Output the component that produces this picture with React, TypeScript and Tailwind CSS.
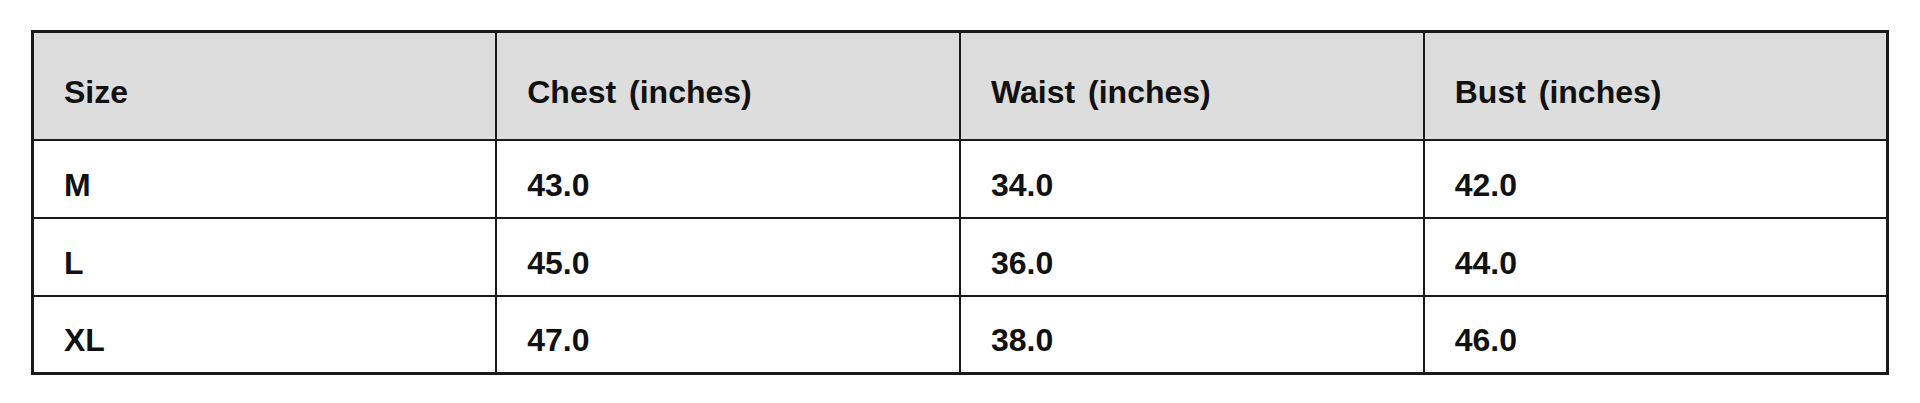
import React from 'react';

const headers = ['Size', 'Chest (inches)', 'Waist (inches)', 'Bust (inches)'];

const rows = [
  ['M', '43.0', '34.0', '42.0'],
  ['L', '45.0', '36.0', '44.0'],
  ['XL', '47.0', '38.0', '46.0'],
];

export default function App() {
  return (
    <div className="w-[1920px] h-[403px] bg-white pt-[30px] px-[31px] font-['Liberation_Sans',Arial,sans-serif] text-[#111]">
      <table className="w-full table-fixed border-collapse border-[3px] border-[#1a1a1a]">
        <thead>
          <tr className="bg-[#dddddd]">
            {headers.map((h) => (
              <th
                key={h}
                className="h-[108px] border-[2.5px] border-[#1a1a1a] pl-[30px] pt-[12px] text-left align-middle text-[32px] font-bold [word-spacing:4px]"
              >
                {h}
              </th>
            ))}
          </tr>
        </thead>
        <tbody>
          {rows.map((r) => (
            <tr key={r[0]}>
              {r.map((c, i) => (
                <td
                  key={i}
                  className="h-[78px] border-[2.5px] border-[#1a1a1a] pl-[30px] pt-[12px] align-middle text-[32px] font-bold"
                >
                  {c}
                </td>
              ))}
            </tr>
          ))}
        </tbody>
      </table>
    </div>
  );
}
